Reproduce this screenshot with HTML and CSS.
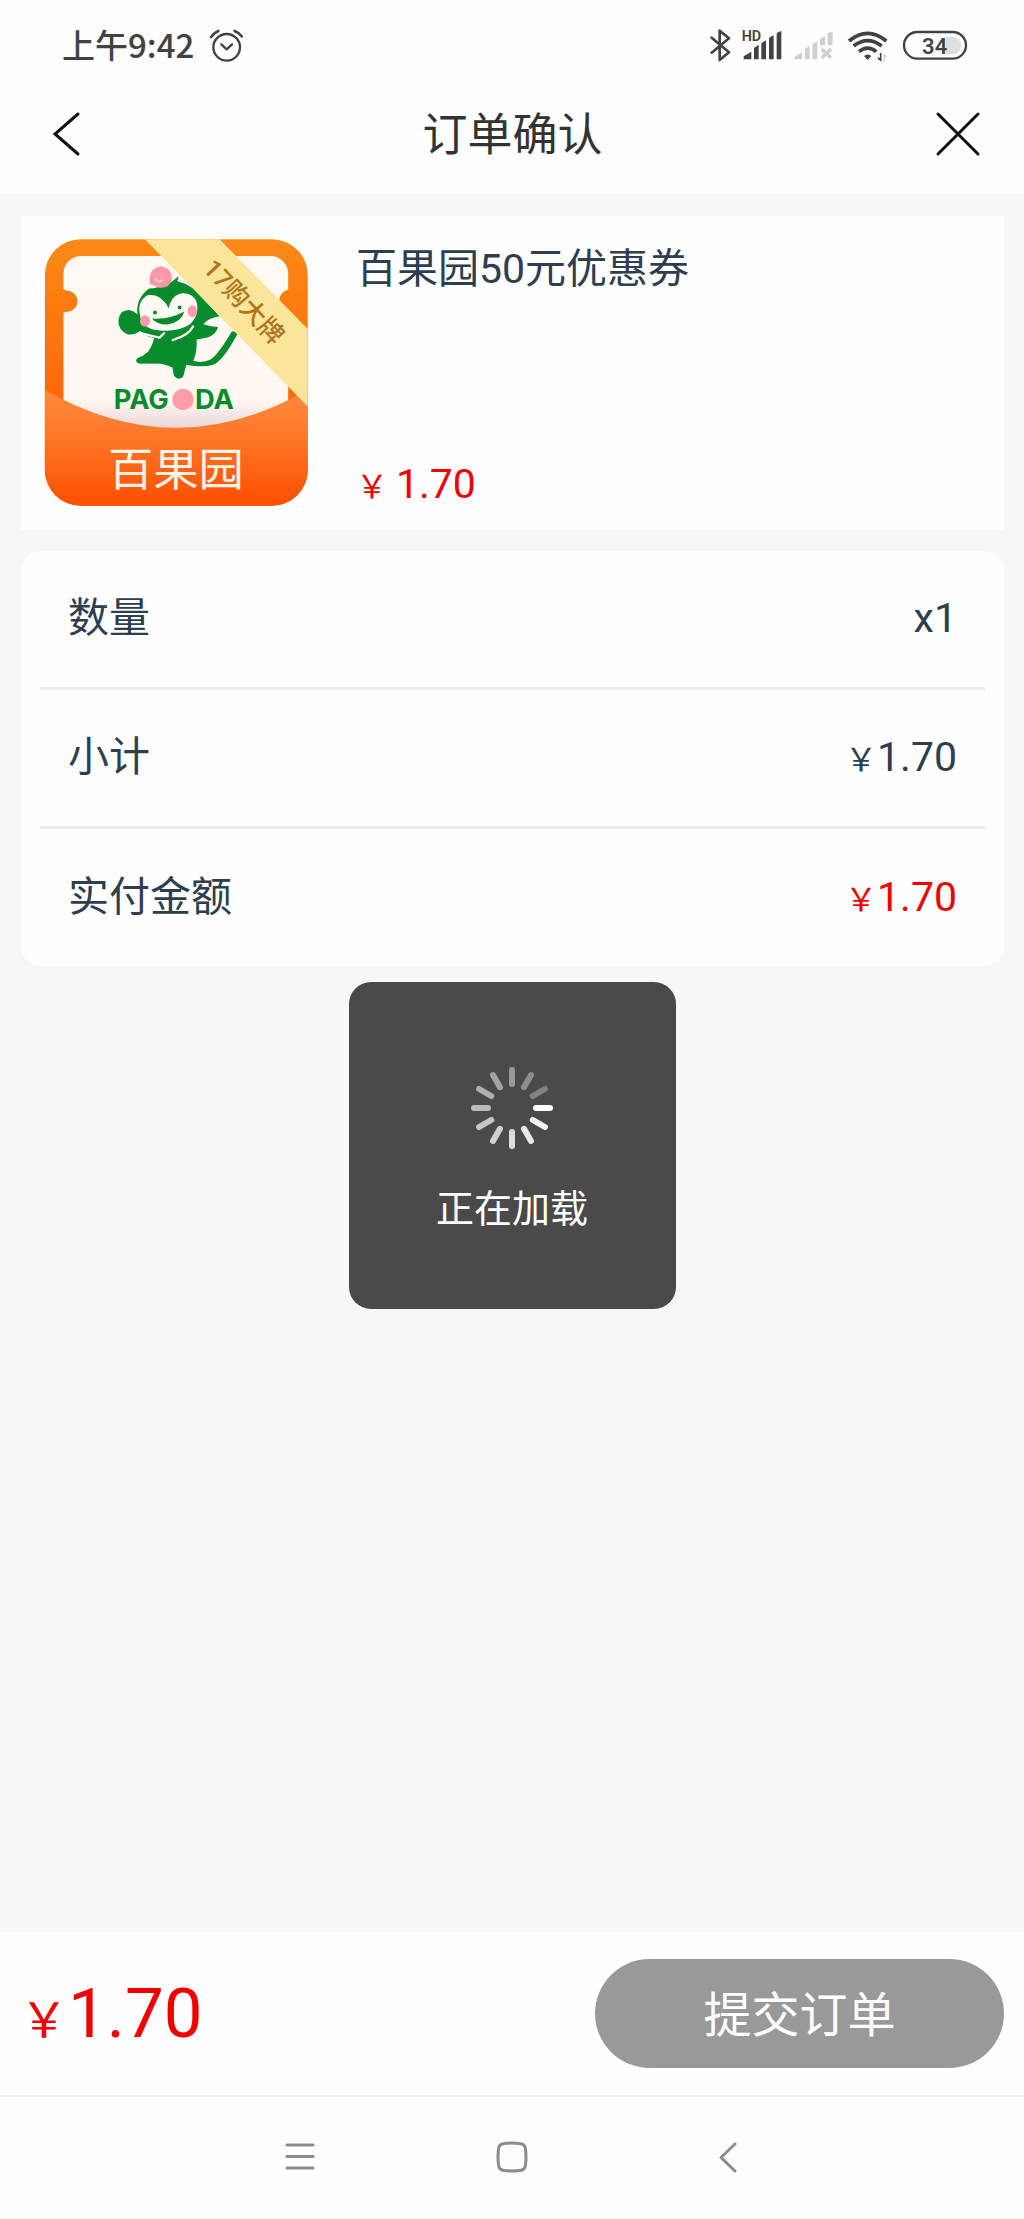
FILE: index.html
```html
<!DOCTYPE html>
<html lang="zh-CN">
<head>
<meta charset="utf-8">
<meta name="viewport" content="width=device-width, initial-scale=1">
<title>订单确认</title>
<link rel="stylesheet" href="styles.css">
</head>
<body>
<div class="screen">
  <div class="status">
    <div class="status-left">
      <span class="clock">上午9:42</span>
      <svg class="icon-alarm" viewBox="627 84 105 108" aria-hidden="true">
        <g fill="none" stroke="#424242" stroke-width="7" stroke-linecap="round" stroke-linejoin="round">
          <circle cx="680" cy="142" r="40"/>
          <path d="M664 133L680 148L696 133"/>
          <path d="M633 111Q642 98 655 93M704 93Q717 98 725 109" stroke-width="8"/>
        </g>
      </svg>
    </div>
    <div class="status-right">
      <svg class="icon-bluetooth" viewBox="60 84 63 108" aria-hidden="true">
        <path d="M65 113L117 157L89 180V92L117 115L65 158" fill="none" stroke="#424242" stroke-width="8" stroke-linecap="round" stroke-linejoin="round"/>
      </svg>
      <svg class="icon-signal" viewBox="153 84 126 108" aria-hidden="true">
        <text x="155" y="123" class="hd">HD</text>
        <path fill="#424242" d="M161 178V169L184 155V178ZM192 178V144L206 134V178ZM214 178V133Q214 129 218 127L228 121V178ZM237 178V117Q237 113 241 111L251 106V178ZM260 178V104Q260 99 264 97L274 93V178Z"/>
      </svg>
      <svg class="icon-nosignal" viewBox="309 84 132 108" aria-hidden="true">
        <path fill="#cfcfcf" d="M313 178V172L336 156V178ZM345 178V147L359 137V178ZM367 178V133L382 124V178ZM390 136V117L405 108V136ZM413 136V100L428 93V136Z"/>
        <path d="M395 147L423 174M423 147L395 174" stroke="#cfcfcf" stroke-width="10"/>
      </svg>
      <svg class="icon-wifi" viewBox="471 84 135 108" aria-hidden="true">
        <g fill="none" stroke="#424242" stroke-width="11">
          <path d="M477 123Q533 77 589 123"/>
          <path d="M491 138Q533 106 575 138"/>
          <path d="M507 155Q533 134 559 155"/>
        </g>
        <path fill="#424242" d="M522 168Q533 159 544 168L533 180Z"/>
        <path d="M564 174L572 180V159" fill="none" stroke="#424242" stroke-width="5"/>
        <path d="M582 186V165L590 171" fill="none" stroke="#cfcfcf" stroke-width="4"/>
      </svg>
      <svg class="icon-battery" viewBox="636 84 198 108" aria-label="34%">
        <path d="M768 110H787A26 26 0 0 1 787 163H768Z" fill="#dedede"/>
        <rect x="642" y="96" width="186" height="80" rx="40" fill="none" stroke="#424242" stroke-width="7"/>
        <text x="734" y="161" class="level">34</text>
      </svg>
    </div>
  </div>

  <header class="header">
    <button class="icon-button" type="button" aria-label="返回">
      <svg viewBox="0 0 48 48"><path d="M35 4L12 24L35 44" fill="none" stroke="#111" stroke-width="3" stroke-linecap="round"/></svg>
    </button>
    <h1 class="title">订单确认</h1>
    <button class="icon-button" type="button" aria-label="关闭">
      <svg viewBox="0 0 48 48"><path d="M4 4L44 44M44 4L4 44" fill="none" stroke="#111" stroke-width="3" stroke-linecap="round"/></svg>
    </button>
  </header>

  <main class="main">
    <section class="product">
      <svg class="product-image" viewBox="70 86 792 802" role="img" aria-label="百果园">
        <defs>
          <linearGradient id="back" x1="0" y1="0" x2="0" y2="1"><stop offset="0" stop-color="#fa8a17"/><stop offset=".55" stop-color="#ff6a08"/></linearGradient>
          <linearGradient id="pocket" x1="0" y1="0" x2="0" y2="1"><stop offset="0" stop-color="#ff8a3d"/><stop offset=".35" stop-color="#ff7a2c"/><stop offset="1" stop-color="#ff4e00"/></linearGradient>
          <linearGradient id="ticket" x1="0" y1="0" x2="0" y2="1"><stop offset="0" stop-color="#fff8f3"/><stop offset=".84" stop-color="#fff7f2"/><stop offset="1" stop-color="#e8d6d6"/></linearGradient>
          <clipPath id="tile"><rect x="72" y="87" width="790" height="800" rx="108"/></clipPath>
        </defs>
        <g clip-path="url(#tile)">
          <rect x="70" y="86" width="792" height="802" fill="url(#back)"/>
          <path d="M182 137H750A53 53 0 0 1 803 190V238A36 36 0 0 0 803 308V655H128V308Q133 304 146 304A32 32 0 0 0 146 242Q133 242 128 236V190A53 53 0 0 1 182 137Z" fill="url(#ticket)"/>
          <path d="M452 215L474 198L470 213Q520 225 550 268L597 318Q560 324 548 342Q572 350 592 350Q588 372 560 382L528 388Q530 425 518 452Q545 460 570 448Q595 430 632 366Q641 358 650 372Q612 444 582 462Q545 474 497 464L488 498Q474 514 460 497L455 472Q420 456 400 461L368 460Q350 464 346 452Q348 442 364 438L382 425Q398 400 400 383Q370 378 360 362Q340 375 320 372Q292 360 293 330Q297 298 325 299Q340 302 350 312Q345 265 385 235Q410 235 452 215Z" fill="#078b2d"/>
          <path d="M444 294Q420 247 380 255Q348 275 358 315Q363 355 412 360Q470 367 508 342Q540 312 526 270Q510 245 479 250Q450 260 444 294Z" fill="#fff8f3"/>
          <path d="M393 325Q445 329 491 304Q482 337 440 343Q410 344 393 325Z" fill="#078b2d"/>
          <path d="M366 370Q395 378 417 382L430 369M456 390Q505 375 517 349" fill="none" stroke="#fff8f3" stroke-width="7" stroke-linecap="round"/>
          <circle cx="403" cy="307" r="6" fill="#078b2d"/><circle cx="477" cy="292" r="6" fill="#078b2d"/>
          <ellipse cx="373" cy="332" rx="15" ry="17" fill="#ff9cac"/><ellipse cx="515" cy="303" rx="14" ry="18" fill="#ff9cac"/>
          <path d="M388 222Q380 176 419 168Q457 174 453 209Q445 236 414 232Q398 224 388 222Z" fill="#ff98a8"/>
          <path d="M403 204Q413 222 427 208" fill="none" stroke="#ffc2c9" stroke-width="7"/>
          <text x="279" y="597" class="brand">PAG</text>
          <circle cx="487" cy="568" r="32" fill="#ff9cac"/>
          <text x="523" y="597" class="brand">DA</text>
          <path d="M70 538Q467 768 862 538V888H70Z" fill="url(#pocket)"/>
          <path d="M372 86H596L862 356V590Z" fill="#fbe59a"/>
          <text class="ribbon" transform="translate(668 276) rotate(47)" x="0" y="24">17购大牌</text>
          <text x="466" y="827" class="shop">百果园</text>
        </g>
      </svg>
      <div class="product-info">
        <h2 class="product-name">百果园50元优惠券</h2>
        <p class="product-price"><span class="yen">￥ </span>1.70</p>
      </div>
    </section>

    <dl class="details">
      <div class="row"><dt>数量</dt><dd>x1</dd></div>
      <div class="row"><dt>小计</dt><dd><span class="yen">￥</span>1.70</dd></div>
      <div class="row"><dt>实付金额</dt><dd class="red"><span class="yen">￥</span>1.70</dd></div>
    </dl>
  </main>

  <footer class="checkout">
    <p class="total"><span class="total-yen">￥</span>1.70</p>
    <button class="submit" type="button">提交订单</button>
  </footer>

  <nav class="system-nav">
    <button class="nav-button" type="button" aria-label="菜单">
      <svg viewBox="0 0 40 40"><path d="M7 8H33M7 19.500H33M7 31H33" fill="none" stroke="#8c8c8c" stroke-width="3" stroke-linecap="round"/></svg>
    </button>
    <button class="nav-button" type="button" aria-label="主屏幕">
      <svg viewBox="0 0 40 40"><path d="M12 6.500Q20 5.500 28 6.500Q33 7 33.500 12Q34.500 20 33.500 28Q33 33 28 33.500Q20 34.500 12 33.500Q7 33 6.500 28Q5.500 20 6.500 12Q7 7 12 6.500Z" fill="none" stroke="#8c8c8c" stroke-width="3"/></svg>
    </button>
    <button class="nav-button" type="button" aria-label="返回">
      <svg viewBox="0 0 40 40"><path d="M31 7L17 20.500L31 34" fill="none" stroke="#8c8c8c" stroke-width="3" stroke-linecap="round" stroke-linejoin="round"/></svg>
    </button>
  </nav>

  <div class="overlay">
    <div class="loading" role="status">
      <svg class="spinner" viewBox="-42 -42 84 84" aria-hidden="true">
        <g stroke-width="6" stroke-linecap="round">
          <path d="M24 0H38" stroke="#fff"/>
          <path d="M24 0H38" stroke="#f4f4f4" transform="rotate(30)"/>
          <path d="M24 0H38" stroke="#e8e8e8" transform="rotate(60)"/>
          <path d="M24 0H38" stroke="#dcdcdc" transform="rotate(90)"/>
          <path d="M24 0H38" stroke="#d0d0d0" transform="rotate(120)"/>
          <path d="M24 0H38" stroke="#c5c5c5" transform="rotate(150)"/>
          <path d="M24 0H38" stroke="#bababa" transform="rotate(180)"/>
          <path d="M24 0H38" stroke="#afafaf" transform="rotate(210)"/>
          <path d="M24 0H38" stroke="#a4a4a4" transform="rotate(240)"/>
          <path d="M24 0H38" stroke="#999" transform="rotate(270)"/>
          <path d="M24 0H38" stroke="#8d8d8d" transform="rotate(300)"/>
          <path d="M24 0H38" stroke="#828282" transform="rotate(330)"/>
        </g>
      </svg>
      <p class="loading-text">正在加载</p>
    </div>
  </div>
</div>
</body>
</html>
```
FILE: styles.css
```css
* {
  box-sizing: border-box;
  margin: 0;
  padding: 0;
}

body {
  background: #f7f7f7;
  color: #2c3e50;
  font-family: Roboto, "Noto Sans CJK SC", sans-serif;
}

button {
  border: 0;
  background: none;
  font-family: inherit;
}

svg {
  display: block;
}

.screen {
  display: flex;
  flex-direction: column;
  min-height: 100vh;
}

.status {
  display: flex;
  justify-content: space-between;
  align-items: center;
  height: 72px;
  padding: 20px 56px 0 62px;
  background: #fefefe;
}

.status-left {
  display: flex;
  align-items: center;
  gap: 15px;
}

.status-right {
  display: flex;
  align-items: center;
  gap: 10px;
}

.clock {
  color: #424242;
  font-family: "Noto Sans CJK SC", sans-serif;
  font-size: 33px;
  font-weight: 500;
  line-height: 32px;
  padding-bottom: 4px;
}

.icon-alarm { width: 35px; height: 36px; }
.icon-bluetooth { width: 21px; height: 36px; }
.icon-signal { width: 42px; height: 36px; }
.icon-nosignal { width: 44px; height: 36px; }
.icon-wifi { width: 45px; height: 36px; }
.icon-battery { width: 66px; height: 36px; }

.hd {
  fill: #424242;
  font-size: 43px;
  font-weight: 600;
}

.level {
  fill: #424242;
  font-size: 66px;
  font-weight: 600;
  text-anchor: middle;
}

.header {
  display: flex;
  justify-content: space-between;
  align-items: center;
  height: 122px;
  padding: 2px 42px 0 43px;
  background: #fefefe;
}

.icon-button {
  width: 48px;
  height: 48px;
}

.title {
  color: #333;
  font-size: 45px;
  font-weight: 400;
  line-height: 60px;
  padding-top: 4px;
}

.main {
  flex: 1;
  padding: 22px 20px 22px 21px;
}

.product {
  display: flex;
  gap: 48px;
  padding: 23px 23px 24px;
  background: #fefefe;
}

.product-image {
  flex: none;
  width: 264px;
  height: 267px;
}

.brand {
  fill: #078b2d;
  font-family: Inter, sans-serif;
  font-size: 82px;
  font-weight: 700;
}

.ribbon {
  fill: #b0741c;
  font-size: 76px;
  font-weight: 500;
  text-anchor: middle;
}

.shop {
  fill: #fff3e6;
  font-size: 136px;
  font-weight: 400;
  text-anchor: middle;
}

.product-info {
  display: flex;
  flex: 1;
  flex-direction: column;
  justify-content: space-between;
}

.product-name {
  font-size: 41px;
  font-weight: 400;
  line-height: 60px;
}

.product-price {
  color: #f20000;
  font-size: 41px;
  line-height: 44px;
}

.yen {
  font-size: 32px;
  line-height: 32px;
}

.details {
  margin-top: 21px;
  padding: 0 19px;
  border-radius: 20px;
  background: #fefefe;
}

.row {
  display: flex;
  justify-content: space-between;
  align-items: center;
  height: 139px;
  padding: 0 28px 2px;
  border-bottom: 3px solid #ebebeb;
  font-size: 41px;
  line-height: 48px;
}

.row:last-child {
  height: 137px;
  border-bottom: 0;
}

.red {
  color: #f20000;
}

.checkout {
  display: flex;
  justify-content: space-between;
  align-items: center;
  height: 163px;
  padding: 0 20px;
  background: #fefefe;
}

.total {
  color: #f20000;
  font-size: 69px;
  line-height: 80px;
}

.total-yen {
  font-size: 48px;
  line-height: 48px;
}

.submit {
  width: 409px;
  height: 109px;
  padding-top: 4px;
  border-radius: 55px;
  background: #999;
  color: #fff;
  font-size: 48px;
  line-height: 64px;
}

.system-nav {
  display: grid;
  grid-template-columns: repeat(3, 1fr);
  align-items: center;
  justify-items: center;
  height: 124px;
  padding: 0 19% 2px;
  border-top: 2px solid #eee;
  background: #fdfdfd;
}

.nav-button,
.nav-button svg {
  width: 40px;
  height: 40px;
}

.overlay {
  position: fixed;
  inset: 72px 0 0;
  display: flex;
  align-items: center;
  justify-content: center;
}

.loading {
  display: flex;
  flex-direction: column;
  align-items: center;
  gap: 30px;
  width: 327px;
  height: 327px;
  padding-top: 84px;
  border-radius: 22px;
  background: #4a4a4a;
}

.spinner {
  width: 84px;
  height: 84px;
}

.loading-text {
  color: #fff;
  font-size: 38px;
  line-height: 58px;
}
```
